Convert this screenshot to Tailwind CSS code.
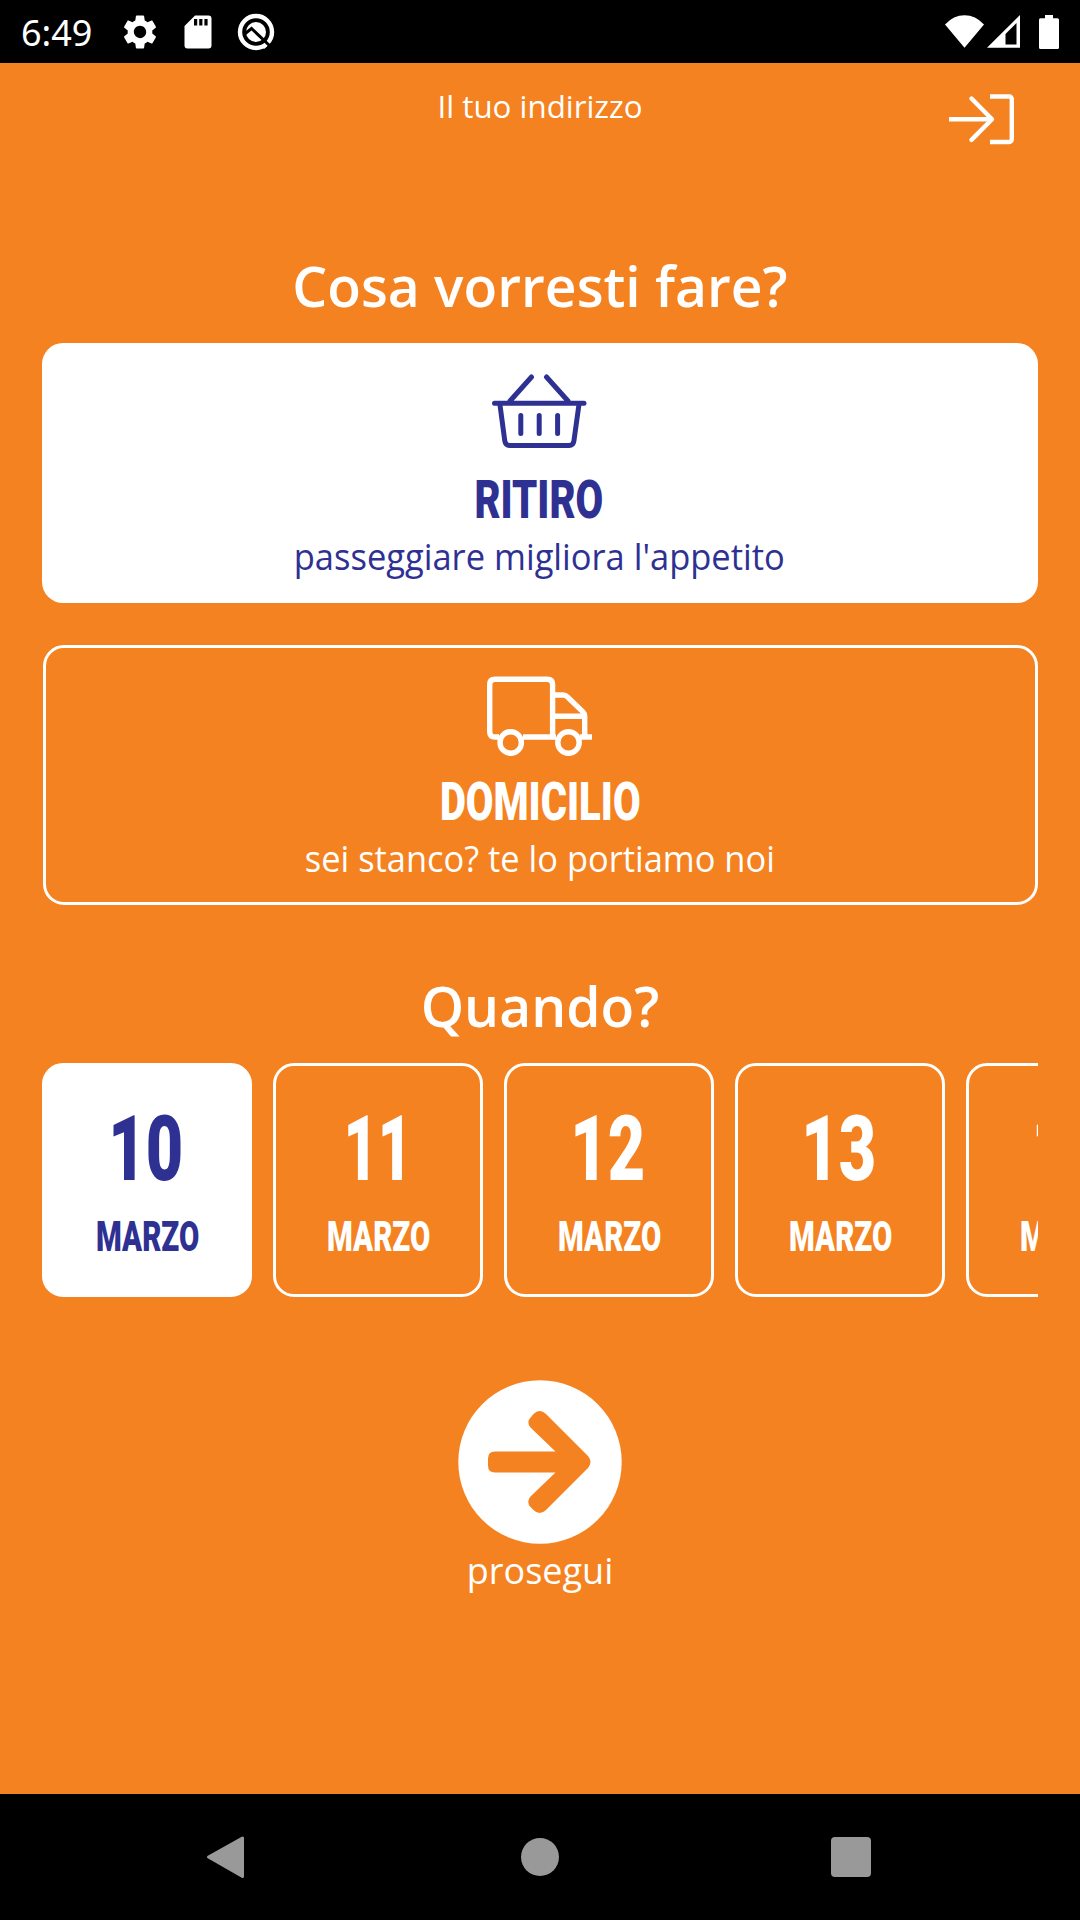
<!DOCTYPE html>
<html lang="it">
<head>
<meta charset="utf-8">
<meta name="viewport" content="width=device-width, initial-scale=1">
<title>Cosa vorresti fare?</title>
<script src="https://cdn.jsdelivr.net/npm/@tailwindcss/browser@4"></script>
</head>
<body class="flex h-[1920px] w-[1080px] flex-col overflow-hidden bg-[#f58220] font-['Open_Sans','Noto_Sans',sans-serif] text-white">
  <!-- Status bar -->
  <header class="flex h-[63px] shrink-0 items-center bg-black pr-[20px] pl-[21px]">
    <span class="w-[101px] pt-[2px] text-[36px] leading-[61px] font-['Noto_Sans',sans-serif]">6:49</span>
    <svg class="h-[36px] w-[36px]" viewBox="1.5 1.5 21 21" fill="#fff"><path d="M19.14 12.94c.04-.3.06-.61.06-.94 0-.32-.02-.64-.07-.94l2.03-1.58a.49.49 0 0 0 .12-.61l-1.92-3.32a.488.488 0 0 0-.59-.22l-2.39.96c-.5-.38-1.03-.7-1.62-.94l-.36-2.54a.484.484 0 0 0-.48-.41h-3.84c-.24 0-.43.17-.47.41l-.36 2.54c-.59.24-1.13.57-1.62.94l-2.39-.96c-.22-.08-.47 0-.59.22L2.74 8.87c-.12.21-.08.47.12.61l2.03 1.58c-.05.3-.09.63-.09.94s.02.64.07.94l-2.03 1.58a.49.49 0 0 0-.12.61l1.92 3.32c.12.22.37.29.59.22l2.39-.96c.5.38 1.03.7 1.62.94l.36 2.54c.05.24.24.41.48.41h3.84c.24 0 .44-.17.47-.41l.36-2.54c.59-.24 1.13-.56 1.62-.94l2.39.96c.22.08.47 0 .59-.22l1.92-3.32c.12-.22.07-.47-.12-.61l-2.01-1.58zM12 15.6A3.61 3.61 0 0 1 8.400 12c0-1.98 1.620-3.600 3.600-3.600s3.600 1.620 3.600 3.600-1.620 3.600-3.600 3.600z"/></svg>
    <svg class="ml-[26px] h-[34px] w-[28px]" viewBox="0 0 28 34"><path fill="#fff" d="M11 .5h13.500a3 3 0 0 1 3 3v27a3 3 0 0 1-3 3h-21a3 3 0 0 1-3-3V11z"/><path fill="#000" d="M10 4h3.200v6.500H10zM15.200 4h3.200v6.500h-3.200zM20.400 4h3.200v6.500h-3.200z"/></svg>
    <svg class="ml-[25px] h-[38px] w-[38px]" viewBox="0 0 38 38" fill="none"><circle cx="19" cy="19" r="16" stroke="#fff" stroke-width="4.400"/><circle cx="19" cy="19" r="10" fill="#fff"/><path stroke="#000" stroke-width="3" d="M7 21.500l7.500-6L33 33"/><path fill="#fff" d="M25 33.500l3-2 2 2-3 2.500z"/></svg>
    <svg class="ml-auto h-[36px] w-[116px]" viewBox="944 13 116 36"><path fill="#fff" d="M945 23.500Q953.500 14.300 964.500 14.300T984 23.500L964.500 46.700zM987 46.700L1020 14v32.700z"/><path fill="#000" d="M1005.500 33L1016.500 22v21.500h-11z"/><path fill="#fff" d="M1045 14h8v3.300h4.500q1.500 0 1.500 1.500V46.500q0 1.500-1.500 1.500h-17q-1.500 0-1.500-1.500V18.800q0-1.500 1.500-1.500h4.500z"/></svg>
  </header>

  <main class="flex h-[1731px] shrink-0 flex-col px-[42px]">
    <!-- Address bar -->
    <div class="grid h-[129px] grid-cols-[120px_1fr_120px]">
      <span></span>
      <p class="pt-[22px] text-center text-[31.3px] leading-[42px]">Il tuo indirizzo</p>
      <svg class="mt-[30px] ml-[30px] h-[52px] w-[68px]" viewBox="948 93 68 52" fill="none" stroke="#fff" stroke-width="4.400"><path d="M949 119.200h43M990 96.500h19.300a2.500 2.500 0 0 1 2.500 2.500v40.500a2.500 2.500 0 0 1-2.500 2.500H990"/><path stroke-linecap="round" stroke-linejoin="round" d="M971.500 98.500l20.500 20.700-20.500 20.700"/></svg>
    </div>

    <h1 class="mt-[55px] h-[96px] scale-x-[0.985] text-center text-[56px] leading-[76px] font-semibold">Cosa vorresti fare?</h1>

    <!-- Delivery mode -->
    <button class="flex h-[260px] w-full flex-col items-center rounded-[21px] bg-white text-[#2e3192]">
      <svg class="mt-[29px] h-[78px] w-[100px]" viewBox="490 372 100 78" fill="none" stroke="#2e3192" stroke-width="5" stroke-linecap="round"><path d="M494.500 403.300h89.500M510 401l21.500-24M568 401l-21.500-24M520.800 415.500v18M539.200 415.500v18M557.600 415.500v18"/><path d="M500 405l4.800 36q.7 4.500 4.800 4.500h59.500q4.200 0 4.800-4.500l5-36"/></svg>
      <span class="mt-[14px] mr-[2px] inline-block scale-x-[0.742] text-[54px] leading-[72px] font-black font-['Roboto',sans-serif]">RITIRO</span>
      <span class="-mt-[1px] mr-[2px] scale-x-[0.958] text-[36px] leading-[44px]">passeggiare migliora l'appetito</span>
    </button>
    <button class="mt-[42px] ml-px flex h-[260px] w-[995px] flex-col items-center rounded-[21px] border-[3px] border-white pr-px">
      <svg class="mt-[26px] h-[84px] w-[110px]" viewBox="485 674 110 84" fill="none" stroke="#fff" stroke-width="5.400"><path d="M499 737h-4q-5.300 0-5.300-5.300V684.600q0-5.300 5.300-5.300h52.300q5.300 0 5.300 5.300V737M523 737h33M552.600 695h10.500q2.500 0 4.300 1.800l15.300 14.800q2 2 2 4.500V737M552.600 716.300h32M580 737h12"/><circle cx="510.700" cy="742.500" r="10.700"/><circle cx="568.500" cy="742.500" r="10.700"/></svg>
      <span class="mt-[8px] inline-block scale-x-[0.742] text-[54px] leading-[72px] font-black font-['Roboto',sans-serif]">DOMICILIO</span>
      <span class="-mt-[1px] mr-px scale-x-[0.956] text-[36px] leading-[44px]">sei stanco? te lo portiamo noi</span>
    </button>

    <h2 class="mt-[62px] h-[96px] scale-x-[0.985] text-center text-[56px] leading-[76px] font-semibold">Quando?</h2>

    <!-- Day picker -->
    <div class="flex h-[234px] gap-[21px] overflow-hidden font-['Roboto',sans-serif] font-black">
      <button class="flex w-[210px] shrink-0 flex-col items-center rounded-[21px] border-[3px] border-white bg-white text-[#2e3192]"><span class="mt-[35px] mr-[3px] scale-x-[0.71] text-[91px] leading-[96px]">10</span><span class="mt-[15px] ml-px scale-x-[0.7] text-[42px] leading-[50px]">MARZO</span></button>
      <button class="flex w-[210px] shrink-0 flex-col items-center rounded-[21px] border-[3px] border-white"><span class="mt-[35px] scale-x-[0.65] text-[91px] leading-[96px]">11</span><span class="mt-[15px] ml-px scale-x-[0.7] text-[42px] leading-[50px]">MARZO</span></button>
      <button class="flex w-[210px] shrink-0 flex-col items-center rounded-[21px] border-[3px] border-white"><span class="mt-[35px] mr-[2px] scale-x-[0.71] text-[91px] leading-[96px]">12</span><span class="mt-[15px] ml-px scale-x-[0.7] text-[42px] leading-[50px]">MARZO</span></button>
      <button class="flex w-[210px] shrink-0 flex-col items-center rounded-[21px] border-[3px] border-white"><span class="mt-[35px] mr-[2px] scale-x-[0.71] text-[91px] leading-[96px]">13</span><span class="mt-[15px] ml-px scale-x-[0.7] text-[42px] leading-[50px]">MARZO</span></button>
      <button class="flex w-[210px] shrink-0 flex-col items-center rounded-[21px] border-[3px] border-white"><span class="mt-[35px] scale-x-[0.75] text-[91px] leading-[96px]">14</span><span class="mt-[15px] ml-px scale-x-[0.7] text-[42px] leading-[50px]">MARZO</span></button>
    </div>

    <!-- Continue -->
    <button class="mt-[83px] flex flex-col items-center self-center">
      <svg class="h-[164px] w-[164px]" viewBox="458 1380 164 164"><circle cx="540" cy="1462" r="81.700" fill="#fff"/><path fill="#f58220" d="M530.500 1427.500q-4.500-5.500.5-10.500l2.500-3q6-6 12.500 0L588 1456q5 6 0 12L546 1510q-6.500 6-12.500 0l-3-3q-4.500-5 0-10.500L555.500 1472.500H495q-7 0-7-7v-7q0-7 7-7h60.500z"/></svg>
      <span class="text-[36px] leading-[54px]">prosegui</span>
    </button>
  </main>

  <!-- System navigation -->
  <nav class="flex h-[126px] shrink-0 items-center justify-between bg-black pr-[209px] pl-[206px]">
    <svg class="h-[44px] w-[42px]" viewBox="206 1835 42 44"><path fill="#999" stroke="#999" stroke-width="3" stroke-linejoin="round" d="M208.500 1857L242.500 1838v38.500z"/></svg>
    <span class="size-[38px] rounded-full bg-[#999]"></span>
    <span class="size-[40px] rounded-[4px] bg-[#999]"></span>
  </nav>
</body>
</html>
